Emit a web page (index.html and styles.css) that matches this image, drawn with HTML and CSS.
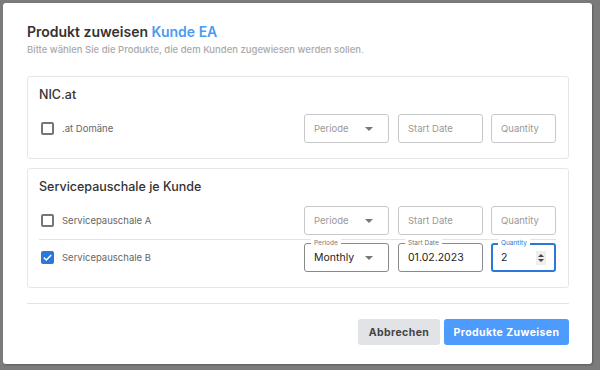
FILE: index.html
```html
<!DOCTYPE html>
<html lang="de">
<head>
  <meta charset="UTF-8" />
  <title>Produkt zuweisen</title>
  <link rel="stylesheet" href="styles.css">
</head>
<body>

  <div class="modal">
    <h1 class="title">Produkt zuweisen <span class="accent">Kunde EA</span></h1>
    <p class="subtitle">Bitte wählen Sie die Produkte, die dem Kunden zugewiesen werden sollen.</p>

    <!-- NIC.at -->
    <div class="group">
      <h2>NIC.at</h2>
      <div class="row">
        <span class="check"></span>
        <span class="label">.at Domäne</span>
        <div class="field select"><span class="ph">Periode</span><span class="caret"></span></div>
        <div class="field date"><span class="ph">Start Date</span></div>
        <div class="field qty"><span class="ph">Quantity</span></div>
      </div>
    </div>

    <!-- Servicepauschale -->
    <div class="group">
      <h2>Servicepauschale je Kunde</h2>
      <div class="row divided">
        <span class="check"></span>
        <span class="label">Servicepauschale A</span>
        <div class="field select"><span class="ph">Periode</span><span class="caret"></span></div>
        <div class="field date"><span class="ph">Start Date</span></div>
        <div class="field qty"><span class="ph">Quantity</span></div>
      </div>
      <div class="row">
        <span class="check checked">
          <svg viewBox="0 0 13 13" width="13" height="13"><path d="M2.8 6.6 L5.3 9 L10.2 3.9" fill="none" stroke="#fff" stroke-width="1.5"/></svg>
        </span>
        <span class="label">Servicepauschale B</span>
        <div class="field select filled"><span class="legend">Periode</span><span class="val">Monthly</span><span class="caret"></span></div>
        <div class="field date filled"><span class="legend">Start Date</span><span class="val">01.02.2023</span></div>
        <div class="field qty filled focus"><span class="legend">Quantity</span><span class="val">2</span>
          <span class="spin"><span class="up"></span><span class="down"></span></span>
        </div>
      </div>
    </div>

    <div class="footer">
      <button class="btn cancel">Abbrechen</button>
      <button class="btn primary">Produkte Zuweisen</button>
    </div>
  </div>

</body>
</html>
```

FILE: styles.css
```css
body {
  margin: 0;
  background-color: #7b7b7b;
  font-family: 'Inter', 'Noto Sans', sans-serif;
  color: #333;
  width: 600px;
  height: 370px;
  overflow: hidden;
}

.modal {
  margin: 3px 0 0 3px;
  width: 589px;
  height: 361px;
  box-sizing: border-box;
  background-color: #fff;
  border-radius: 3px;
  box-shadow: 1px 1px 2px rgba(0,0,0,0.25);
  padding: 19px 23px 0 24px;
}

.title {
  margin: 0;
  font-size: 14px;
  font-weight: 600;
  line-height: 20px;
  color: #333;
}

.accent {
  color: #4c9bf2;
}

.subtitle {
  margin: 2px 0 20px;
  font-size: 9.5px;
  line-height: 12px;
  font-weight: 500;
  color: #aaa;
}

.group {
  border: 1px solid #e6e6e6;
  border-radius: 3px;
  padding: 10px 12px 13px 11px;
  margin-bottom: 9px;
}

.group h2 {
  margin: 0 0 9px;
  font-size: 12.5px;
  font-weight: 500;
  line-height: 16px;
  color: #333;
}

.row {
  display: flex;
  align-items: center;
  padding: 2px 0;
}

.row.divided {
  border-bottom: 1px solid #e3e3e3;
  padding-bottom: 4px;
}

.row.divided + .row {
  padding-top: 3px;
}

.check {
  width: 13px;
  height: 13px;
  box-sizing: border-box;
  border: 2px solid #757575;
  border-radius: 2px;
  margin: 0 8px 0 2px;
  display: flex;
  align-items: center;
  justify-content: center;
}

.check.checked {
  background-color: #2a78d8;
  border: none;
}

.label {
  font-size: 9.5px;
  color: #666;
  flex-grow: 1;
}

.field {
  position: relative;
  height: 29px;
  box-sizing: border-box;
  border: 1px solid #c8c8c8;
  border-radius: 3px;
  display: flex;
  align-items: center;
  padding: 0 9px;
  font-size: 9.5px;
}

.select { width: 85px; }
.date { width: 85px; margin-left: 9px; }
.qty { width: 65px; margin-left: 8px; }

.ph {
  color: #999;
  flex-grow: 1;
}

.caret {
  width: 0;
  height: 0;
  border-left: 4px solid transparent;
  border-right: 4px solid transparent;
  border-top: 4px solid #777;
  margin-right: 6px;
}

.filled {
  border-color: #8a8a8a;
}

.val {
  color: #222;
  font-size: 10.5px;
  flex-grow: 1;
}

.legend {
  position: absolute;
  top: -5px;
  left: 6px;
  padding: 0 3px;
  background-color: #fff;
  font-size: 6.5px;
  line-height: 8px;
  color: #777;
}

.focus {
  border: 2px solid #2a78d8;
  padding: 0 8px;
}

.focus .legend {
  color: #2a78d8;
  top: -6px;
  left: 5px;
}

.spin {
  display: flex;
  flex-direction: column;
  align-items: center;
  justify-content: center;
  gap: 2px;
  width: 10px;
  height: 14px;
  background-color: #eee;
}

.spin .up {
  border-left: 3px solid transparent;
  border-right: 3px solid transparent;
  border-bottom: 3px solid #444;
}

.spin .down {
  border-left: 3px solid transparent;
  border-right: 3px solid transparent;
  border-top: 3px solid #444;
}

.footer {
  border-top: 1px solid #e3e3e3;
  margin-top: 15px;
  padding-top: 15px;
  display: flex;
  justify-content: flex-end;
  gap: 4px;
}

.btn {
  height: 26px;
  border: none;
  border-radius: 3px;
  font-family: 'Inter', 'Noto Sans', sans-serif;
  font-size: 10.5px;
  font-weight: 700;
  letter-spacing: 0.4px;
  padding: 0;
  white-space: nowrap;
}

.cancel {
  width: 82px;
  background-color: #e1e3e6;
  color: #444;
}

.primary {
  width: 125px;
  background-color: #4d9bfd;
  color: #fff;
}
```
